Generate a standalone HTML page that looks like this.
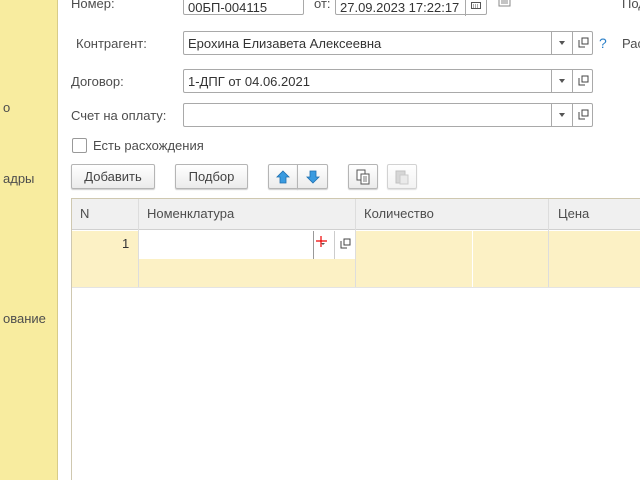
<!DOCTYPE html>
<html style="width:640px;height:480px;overflow:hidden"><head><meta charset="utf-8"><style>
*{box-sizing:border-box;margin:0;padding:0}
body{width:640px;height:480px;overflow:hidden;background:#fff;position:relative;font-family:"Liberation Sans",sans-serif;font-size:13px;color:#4d4d4d}
.a{position:absolute}
.side{left:0;top:0;width:58px;height:480px;background:#f8ec9f;border-right:1px solid #d8cc88}
.lbl{color:#4d4d4d;font-size:13px}
.fld{border:1px solid #a9a9a9;border-radius:2px;background:#fff;height:24px;font-size:13px;color:#333;padding:4px 0 0 4px}
.bt{border-left:1px solid #a9a9a9;top:0;height:22px;width:21px}
.btn{border:1px solid #b5b5b5;border-radius:2px;background:linear-gradient(#fff,#ebebeb);height:25px;text-align:center;line-height:23px;color:#444;box-shadow:0 1px 1px #ccc}
.drop{width:0;height:0;border-left:3px solid transparent;border-right:3px solid transparent;border-top:4px solid #555;position:absolute;left:7px;top:9px}
.open{position:absolute;left:5px;top:5px;width:11px;height:11px}
</style></head><body>
<div class="a side"></div>
<div class="a lbl" style="left:3px;top:100px">о</div>
<div class="a lbl" style="left:3px;top:171px">адры</div>
<div class="a lbl" style="left:3px;top:311px">ование</div>

<div class="a lbl" style="left:71px;top:-4px">Номер:</div>
<div class="a fld" style="left:183px;top:-9px;width:121px;padding-top:8px">00БП-004115</div>
<div class="a lbl" style="left:314px;top:-4px">от:</div>
<div class="a fld" style="left:335px;top:-9px;width:152px;padding-top:8px">27.09.2023 17:22:17
<div class="a bt" style="left:129px;height:24px;top:0"><svg style="position:absolute;left:5px;top:10px" width="10" height="7"><rect x="0.5" y="0.5" width="9" height="6" fill="none" stroke="#555"/><path d="M2 3h1M4 3h1M6 3h1M2 5h1M4 5h1M6 5h1" stroke="#555"/></svg></div></div>
<svg class="a" style="left:498px;top:-2px" width="14" height="10"><rect x="1" y="0" width="11" height="8" fill="none" stroke="#888"/><line x1="3" y1="3" x2="10" y2="3" stroke="#888"/><line x1="3" y1="5" x2="10" y2="5" stroke="#888"/></svg>
<div class="a lbl" style="left:622px;top:-4px">Под</div>

<div class="a lbl" style="left:76px;top:36px">Контрагент:</div>
<div class="a fld" style="left:183px;top:31px;width:410px">Ерохина Елизавета Алексеевна
<div class="a bt" style="left:367px"><div class="drop"></div></div>
<div class="a bt" style="left:388px"><svg class="open"><path d="M1 3v7h6M4 1h6v6h-6z" fill="none" stroke="#444"/></svg></div></div>
<div class="a" style="left:599px;top:35px;color:#2a7fc8;font-size:14px">?</div>
<div class="a lbl" style="left:622px;top:36px">Рас</div>

<div class="a lbl" style="left:71px;top:74px">Договор:</div>
<div class="a fld" style="left:183px;top:69px;width:410px">1-ДПГ от 04.06.2021
<div class="a bt" style="left:367px"><div class="drop"></div></div>
<div class="a bt" style="left:388px"><svg class="open"><path d="M1 3v7h6M4 1h6v6h-6z" fill="none" stroke="#444"/></svg></div></div>

<div class="a lbl" style="left:71px;top:108px">Счет на оплату:</div>
<div class="a fld" style="left:183px;top:103px;width:410px">
<div class="a bt" style="left:367px"><div class="drop"></div></div>
<div class="a bt" style="left:388px"><svg class="open"><path d="M1 3v7h6M4 1h6v6h-6z" fill="none" stroke="#444"/></svg></div></div>

<div class="a" style="left:72px;top:138px;width:15px;height:15px;border:1px solid #999;border-radius:2px;background:#fff"></div>
<div class="a lbl" style="left:93px;top:138px">Есть расхождения</div>

<div class="a btn" style="left:71px;top:164px;width:84px">Добавить</div>
<div class="a btn" style="left:175px;top:164px;width:73px">Подбор</div>
<div class="a btn" style="left:268px;top:164px;width:30px;border-radius:2px 0 0 2px"><svg width="14" height="14" style="margin-top:5px"><path d="M7 1l6 6h-3v6h-6v-6h-3z" fill="#3a9be0" stroke="#1d6fb0" stroke-width=".8"/></svg></div>
<div class="a btn" style="left:297px;top:164px;width:31px;border-radius:0 2px 2px 0"><svg width="14" height="14" style="margin-top:5px"><path d="M7 13l6-6h-3v-6h-6v6h-3z" fill="#3a9be0" stroke="#1d6fb0" stroke-width=".8"/></svg></div>
<div class="a btn" style="left:348px;top:164px;width:30px"><svg width="16" height="16" style="margin-top:4px"><rect x="2" y="1" width="8" height="10" fill="#fff" stroke="#555"/><rect x="6" y="5" width="8" height="10" fill="#fff" stroke="#555"/><path d="M8 8h4M8 10h4M8 12h4" stroke="#777"/></svg></div>
<div class="a btn" style="left:387px;top:164px;width:30px;opacity:.6"><svg width="16" height="16" style="margin-top:4px"><rect x="2" y="2" width="9" height="12" fill="#bbb" stroke="#999"/><rect x="6" y="6" width="8" height="9" fill="#ddd" stroke="#aaa"/></svg></div>

<div class="a" style="left:71px;top:198px;width:580px;height:282px;border:1px solid #cfc8b0;border-bottom:none;background:#fff"></div>
<div class="a" style="left:72px;top:199px;width:568px;height:31px;background:#f0f0f0;border-bottom:1px solid #d0d0d0"></div>
<div class="a" style="left:72px;top:231px;width:568px;height:57px;background:#fcf1c5;border-bottom:1px solid #e4e4e4"></div>
<div class="a" style="left:138px;top:199px;width:1px;height:88px;background:#ddd"></div>
<div class="a" style="left:355px;top:199px;width:1px;height:88px;background:#ddd"></div>
<div class="a" style="left:548px;top:199px;width:1px;height:88px;background:#ddd"></div>
<div class="a" style="left:472px;top:231px;width:1px;height:56px;background:#fff"></div>
<div class="a lbl" style="left:80px;top:206px">N</div>
<div class="a lbl" style="left:147px;top:206px">Номенклатура</div>
<div class="a lbl" style="left:364px;top:206px">Количество</div>
<div class="a lbl" style="left:558px;top:206px">Цена</div>
<div class="a" style="left:122px;top:236px;color:#333">1</div>
<div class="a" style="left:139px;top:231px;width:216px;height:28px;background:#fff"></div>
<div class="a" style="left:313px;top:231px;width:1px;height:28px;background:#999"></div>
<div class="a" style="left:334px;top:231px;width:1px;height:28px;background:#ccc"></div>
<svg class="a" style="left:315px;top:235px" width="14" height="14"><path d="M6 1v11M1 6h11" stroke="#e00" stroke-width="1.2"/><path d="M6 8l2 2 2-2z" fill="#555"/></svg>
<svg class="a" style="left:340px;top:238px" width="11" height="11"><path d="M1 3v7h6M4 1h6v6h-6z" fill="none" stroke="#444"/></svg>
</body></html>
